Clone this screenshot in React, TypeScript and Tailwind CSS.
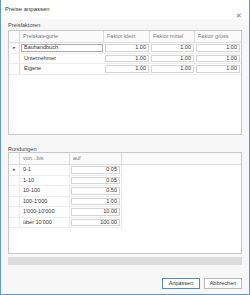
import React from "react";

const faktoren = [
  { name: "Bauhandbuch", klein: "1.00", mittel: "1.00", gross: "1.00", active: true },
  { name: "Unternehmer", klein: "1.00", mittel: "1.00", gross: "1.00" },
  { name: "Eigene", klein: "1.00", mittel: "1.00", gross: "1.00" },
];

const rundungen = [
  { range: "0-1", auf: "0.05", active: true },
  { range: "1-10", auf: "0.05" },
  { range: "10-100", auf: "0.50" },
  { range: "100-1'000", auf: "1.00" },
  { range: "1'000-10'000", auf: "10.00" },
  { range: "über 10'000", auf: "100.00" },
];

const NumBox = ({ value }: { value: string }) => (
  <div className="h-full p-px">
    <div className="h-full border border-[#d4d4d4] bg-white flex items-center justify-end pr-[2px] text-[#333]">
      {value}
    </div>
  </div>
);

const HeadCell = ({ label, w }: { label?: string; w: string }) => (
  <div className={`${w} shrink-0 border-r border-[#dcdcdc] flex items-center pl-[3px] text-[#7a7a7a]`}>
    {label}
  </div>
);

export default function App() {
  return (
    <div
      className="w-[250px] h-[295px] flex flex-col bg-[#f7f7f7] border-x border-b border-[#5b9bd5] text-[5.5px] leading-none"
      style={{ fontFamily: '"Liberation Sans", Arial, sans-serif' }}
    >
      {/* Title bar */}
      <div className="h-[19px] shrink-0 bg-white flex justify-between pl-[4px] pr-[7px]">
        <span className="mt-[6px] text-[#333] text-[6px]">Preise anpassen</span>
        <span className="mt-[12px] text-[#777] text-[7px]">✕</span>
      </div>

      <div className="flex-1 flex flex-col px-[7px]">
        {/* Preisfaktoren */}
        <div className="mt-[4px] h-[6px] text-[#444]">Preisfaktoren</div>
        <div className="mt-[1px] h-[105px] border border-[#c8c8c8] bg-white flex flex-col">
          <div className="h-[12px] flex border-b border-[#dcdcdc] bg-[#fafafa]">
            <HeadCell w="w-[11px]" />
            <HeadCell w="w-[84px]" label="Preiskategorie" />
            <HeadCell w="w-[46px]" label="Faktor klein" />
            <HeadCell w="w-[45px]" label="Faktor mittel" />
            <div className="flex-1 flex items-center pl-[3px] text-[#7a7a7a]">Faktor gross</div>
          </div>
          {faktoren.map((r) => (
            <div key={r.name} className="h-[10.5px] flex border-b border-[#ececec]">
              <div className="w-[11px] shrink-0 border-r border-[#dcdcdc] flex items-center justify-center text-[#555] text-[5px]">
                {r.active ? "▸" : ""}
              </div>
              <div className="w-[84px] shrink-0 h-full p-px">
                <div
                  className={`h-full flex items-center pl-[2px] text-[#333] border ${
                    r.active ? "border-[#a8a8a8] bg-white" : "border-transparent"
                  }`}
                >
                  {r.name}
                </div>
              </div>
              <div className="w-[46px] shrink-0">
                <NumBox value={r.klein} />
              </div>
              <div className="w-[45px] shrink-0">
                <NumBox value={r.mittel} />
              </div>
              <div className="flex-1">
                <NumBox value={r.gross} />
              </div>
            </div>
          ))}
        </div>

        {/* Rundungen */}
        <div className="mt-[12px] h-[6px] text-[#444]">Rundungen</div>
        <div className="mt-[-1px] h-[102px] border border-[#c8c8c8] bg-white flex flex-col">
          <div className="h-[12px] flex border-b border-[#dcdcdc] bg-[#fafafa]">
            <HeadCell w="w-[11px]" />
            <HeadCell w="w-[50px]" label="von...bis" />
            <HeadCell w="w-[52px]" label="auf" />
            <div className="flex-1" />
          </div>
          {rundungen.map((r) => (
            <div key={r.range} className="h-[10.5px] flex">
              <div className="w-[11px] shrink-0 border-r border-b border-[#ececec] flex items-center justify-center text-[#555] text-[5px]">
                {r.active ? "▸" : ""}
              </div>
              <div className="w-[50px] shrink-0 border-r border-b border-[#ececec] flex items-center pl-[3px] text-[#333]">
                {r.range}
              </div>
              <div className="w-[52px] shrink-0 border-r border-b border-[#ececec]">
                <NumBox value={r.auf} />
              </div>
            </div>
          ))}
        </div>

        {/* Fortschritt */}
        <div className="mt-[3px] h-[8px] bg-[#dcdcdc]" />

        {/* Buttons */}
        <div className="mt-[13px] flex justify-end gap-[4px]">
          <button className="w-[38px] h-[11px] border border-[#4a8ad4] bg-white text-[#333] flex items-center justify-center">
            Anpassen
          </button>
          <button className="w-[38px] h-[11px] border border-[#b8b8b8] bg-white text-[#333] flex items-center justify-center">
            Abbrechen
          </button>
        </div>
      </div>
    </div>
  );
}
